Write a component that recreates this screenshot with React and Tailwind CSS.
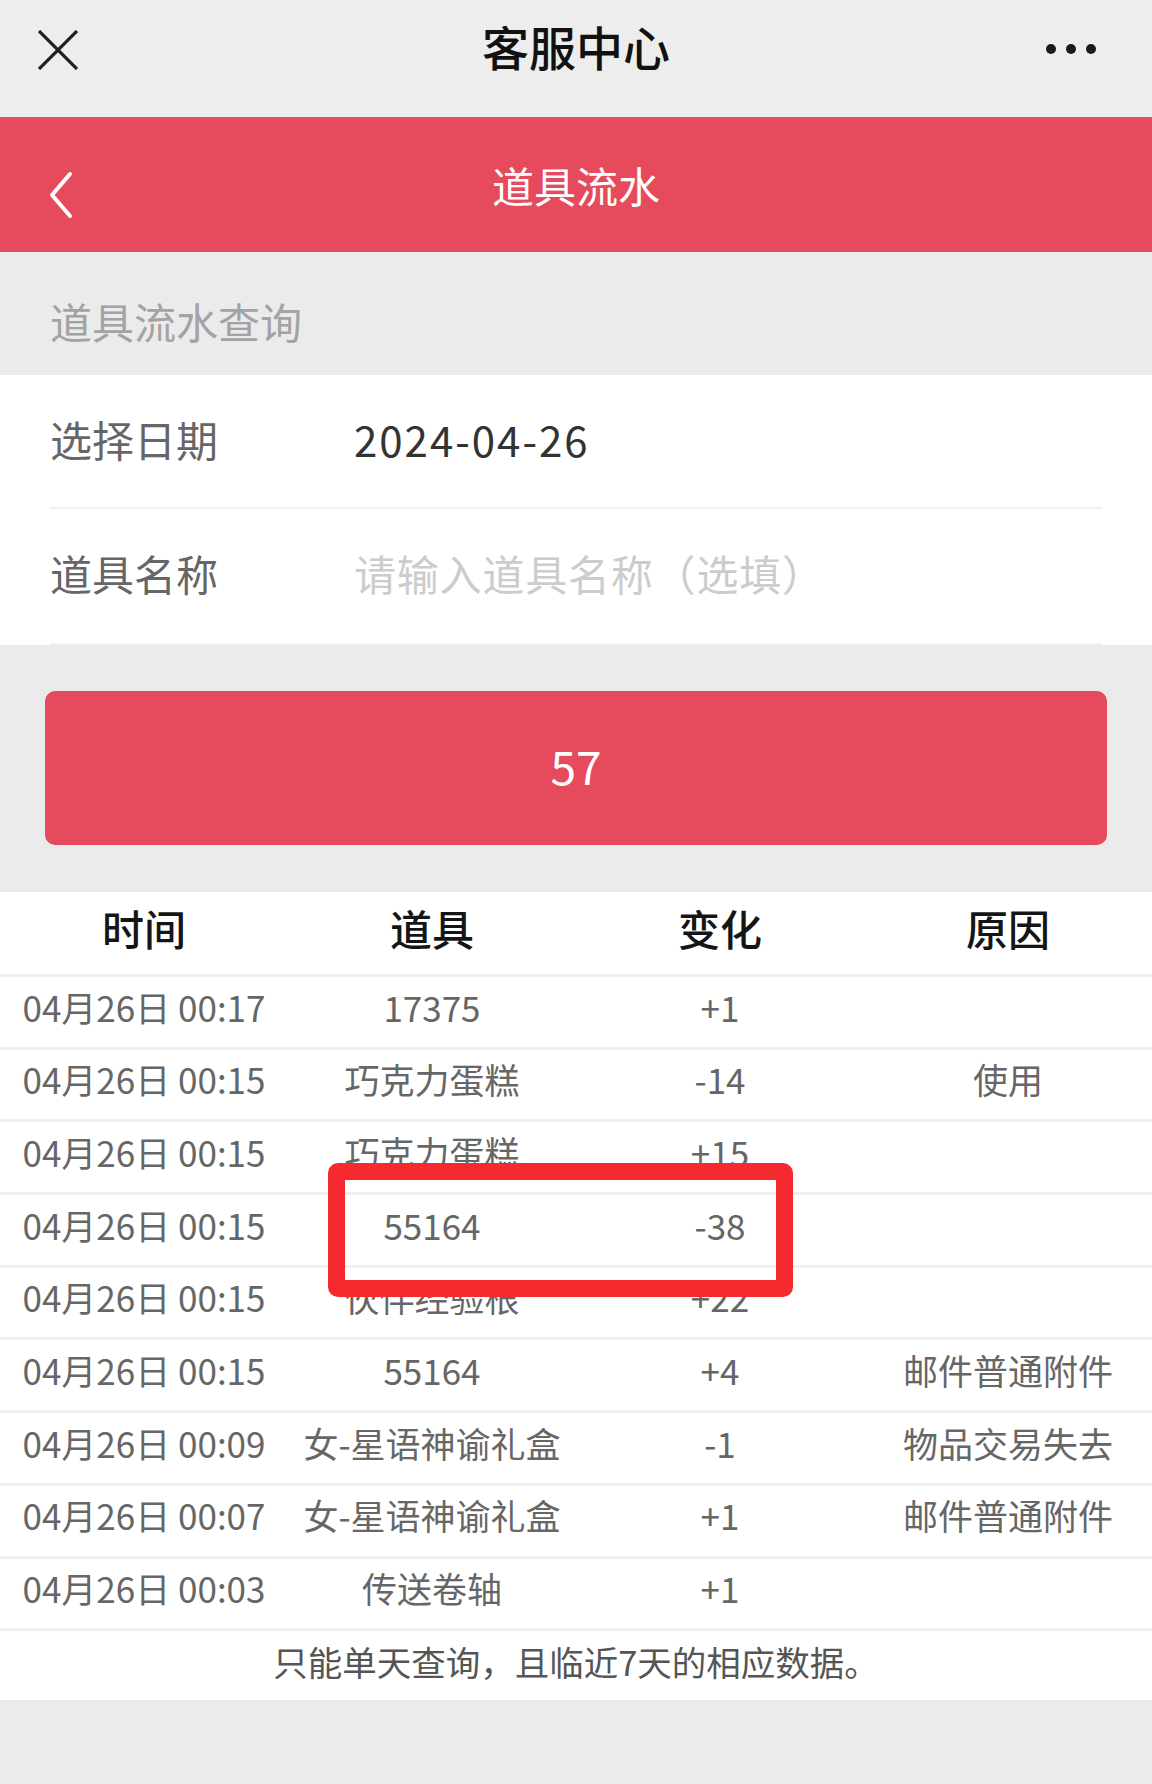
import React from 'react';

const rows = [
  { time: '04月26日 00:17', item: '17375', change: '+1', reason: '' },
  { time: '04月26日 00:15', item: '巧克力蛋糕', change: '-14', reason: '使用' },
  { time: '04月26日 00:15', item: '巧克力蛋糕', change: '+15', reason: '' },
  { time: '04月26日 00:15', item: '55164', change: '-38', reason: '' },
  { time: '04月26日 00:15', item: '伙伴经验根', change: '+22', reason: '' },
  { time: '04月26日 00:15', item: '55164', change: '+4', reason: '邮件普通附件' },
  { time: '04月26日 00:09', item: '女-星语神谕礼盒', change: '-1', reason: '物品交易失去' },
  { time: '04月26日 00:07', item: '女-星语神谕礼盒', change: '+1', reason: '邮件普通附件' },
  { time: '04月26日 00:03', item: '传送卷轴', change: '+1', reason: '' },
];

const font = { fontFamily: '"Noto Sans CJK SC", "Noto Sans", sans-serif' };

export default function App() {
  return (
    <div className="w-[1152px] min-h-[1784px] bg-[#ebebeb]" style={font}>
      {/* wechat top bar */}
      <div className="h-[117px] bg-[#ededed] grid grid-cols-[1fr_auto_1fr] items-center">
        <div className="pl-[38px] -mt-[18px]">
          <svg width="40" height="40" viewBox="0 0 40 40" className="block">
            <path d="M1 1 L39 39 M39 1 L1 39" stroke="#1f1f1f" strokeWidth="3.2" fill="none" />
          </svg>
        </div>
        <h1 className="text-[47px] font-medium text-[#111] leading-none -mt-[26px]">客服中心</h1>
        <div className="flex justify-end gap-[10px] pr-[56px] -mt-[19px]">
          <span className="w-[10px] h-[10px] rounded-full bg-[#1a1a1a]" />
          <span className="w-[10px] h-[10px] rounded-full bg-[#1a1a1a]" />
          <span className="w-[10px] h-[10px] rounded-full bg-[#1a1a1a]" />
        </div>
      </div>

      {/* red header */}
      <div className="h-[135px] bg-[#e54b5c] grid grid-cols-[1fr_auto_1fr] items-center">
        <div className="pl-[46px] pt-[20px]">
          <svg width="30" height="48" viewBox="0 0 30 48" className="block">
            <path d="M24 3 L6 24 L24 45" stroke="#fff" strokeWidth="4" strokeLinecap="round" strokeLinejoin="round" fill="none" />
          </svg>
        </div>
        <h2 className="text-[42px] text-white leading-none">道具流水</h2>
        <div />
      </div>

      {/* section label */}
      <div className="h-[123px] pt-[14px] pl-[50px] flex items-center text-[42px] text-[#a3a3a3] bg-[#ebebeb]">
        道具流水查询
      </div>

      {/* form */}
      <div className="bg-white px-[50px]">
        <div className="h-[134px] pb-[6px] flex items-center border-b-2 border-[#f2f2f2]">
          <span className="w-[304px] text-[42px] text-[#666]">选择日期</span>
          <span className="text-[42px] text-[#333] tracking-[2px]">2024-04-26</span>
        </div>
        <div className="h-[136px] pb-[8px] flex items-center border-b-2 border-[#f2f2f2]">
          <span className="w-[304px] text-[42px] text-[#666]">道具名称</span>
          <span className="text-[42px] text-[#cccccc] tracking-[0.8px]">请输入道具名称（选填）</span>
        </div>
      </div>

      {/* query button */}
      <div className="px-[45px] pt-[46px] pb-[47px]">
        <button className="w-full h-[154px] pb-[6px] rounded-[10px] bg-[#e54b5c] text-white text-[46px] flex items-center justify-center">
          57
        </button>
      </div>

      {/* result table */}
      <div className="relative bg-white">
        <div className="h-[82px] pb-[12px] grid grid-cols-4 items-center text-center text-[42px] font-medium text-[#151515]">
          <span>时间</span>
          <span>道具</span>
          <span>变化</span>
          <span>原因</span>
        </div>
        {rows.map((r, i) => (
          <div key={i} className="h-[72.7px] pb-[10px] border-t-[3px] border-[#efefef] grid grid-cols-4 items-center text-center text-[35px] text-[#666] whitespace-nowrap">
            <span>{r.time}</span>
            <span>{r.item}</span>
            <span>{r.change}</span>
            <span>{r.reason}</span>
          </div>
        ))}
        <div className="h-[72px] pb-[8px] border-t-[3px] border-[#efefef] flex items-center justify-center text-[34.5px] text-[#555]">
          只能单天查询，且临近7天的相应数据。
        </div>

        {/* annotation */}
        <div className="absolute left-[328px] top-[271px] w-[465px] h-[134px] border-[17px] border-[#f42a2e] rounded-[10px]" />
      </div>
    </div>
  );
}
